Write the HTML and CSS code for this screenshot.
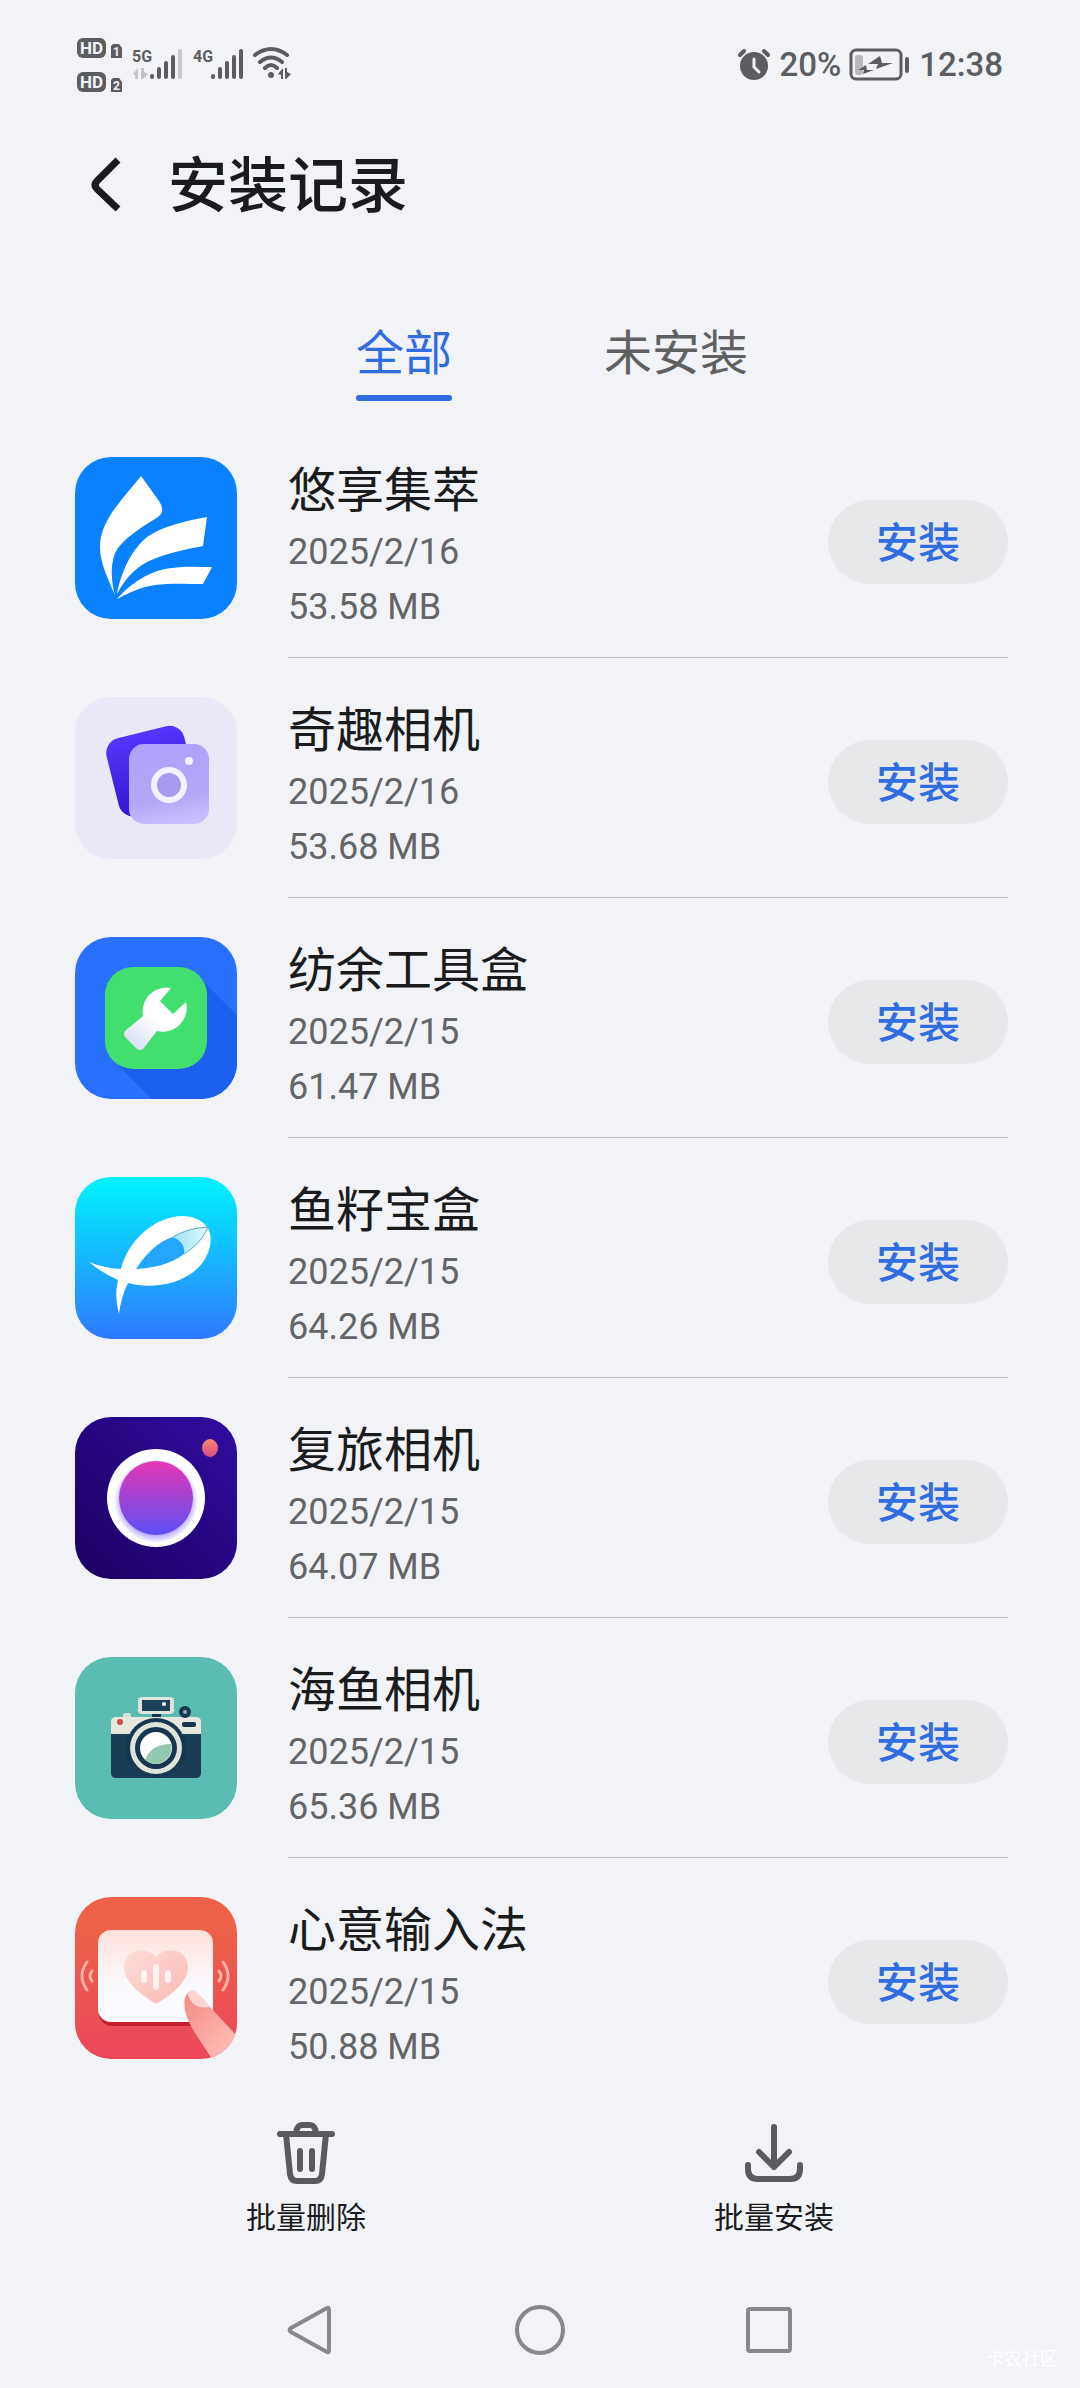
FILE: index.html
```html
<!DOCTYPE html>
<html lang="zh-CN">
<head>
    <meta charset="UTF-8">
    <meta name="viewport" content="width=device-width, initial-scale=1.0">
    <title>安装记录</title>
    <link rel="stylesheet" href="styles.css">
</head>
<body>
    <div class="status-bar">
        <svg class="signal" width="216" height="60" viewBox="0 0 216 60">
            <!-- HD badges -->
            <rect x="0" y="4" width="29" height="20" rx="6" fill="#5c5d5f"/>
            <text x="3" y="20" class="hd">HD</text>
            <path d="M36 10h6l3 4v10h-11v-12z" fill="#5c5d5f"/>
            <text x="36" y="22" class="sim">1</text>
            <rect x="0" y="38" width="29" height="20" rx="6" fill="#5c5d5f"/>
            <text x="3" y="54" class="hd">HD</text>
            <path d="M36 44h6l3 4v10h-11v-12z" fill="#5c5d5f"/>
            <text x="36" y="56" class="sim">2</text>
            <!-- mobile signal -->
            <text x="55" y="28" class="net">5G</text>
            <path d="M56 40l5-6v11h-3v-4zM64 34h3v4l4 2-5 5h-2z" fill="#c3c4c7"/>
            <path d="M75 43v-1M82 43v-8M89 43v-14M96 43v-20" class="bars"/>
            <path d="M103 43v-26" class="bars bars-off"/>
            <text x="116" y="28" class="net">4G</text>
            <path d="M136 43v-1M143 43v-8M150 43v-14M157 43v-20M164 43v-26" class="bars"/>
            <!-- wifi -->
            <path d="M178 21q16-12 32 0M183 28q11-9 22 0M188 34q6-6 12 0" fill="none" stroke="#5c5d5f" stroke-width="4" stroke-linecap="round"/>
            <circle cx="194" cy="41" r="3" fill="#5c5d5f"/>
            <path d="M201 40l5-6v11h-2v-4zM208 34h2v4l4 2-5 5h-1z" fill="#5c5d5f"/>
        </svg>
        <div class="status-right">
            <svg width="34" height="34" viewBox="0 0 34 34">
                <circle cx="17" cy="19" r="14" fill="#5c5d5f"/>
                <path d="M3 8l4-4M27 4l4 4" stroke="#5c5d5f" stroke-width="4" stroke-linecap="round"/>
                <path d="M17 12v8l5 5" fill="none" stroke="#f1f3f7" stroke-width="3" stroke-linecap="round"/>
            </svg>
            <span>20%</span>
            <svg width="62" height="34" viewBox="0 0 62 34">
                <rect x="2" y="3" width="50" height="29" rx="5" fill="none" stroke="#5c5d5f" stroke-width="3"/>
                <rect x="6" y="8" width="8" height="20" rx="3" fill="#b8b9bb"/>
                <path d="M31 9l-12 8h10l-2 5 17-6h-11zM17 18l-8 5h6l-1 4 11-4h-7z" fill="#5c5d5f"/>
                <rect x="56" y="10" width="4" height="16" rx="2" fill="#5c5d5f"/>
            </svg>
            <span>12:38</span>
        </div>
    </div>

    <header class="header">
        <button class="back" aria-label="返回">
            <svg width="36" height="60" viewBox="0 0 36 60">
                <path d="M30 5L9 26q-4 4 0 8l21 20" fill="none" stroke="#1a1b1d" stroke-width="7" stroke-linejoin="round"/>
            </svg>
        </button>
        <h1>安装记录</h1>
    </header>

    <nav class="tabs">
        <a href="#all" class="tab active"><span>全部</span></a>
        <a href="#pending" class="tab"><span>未安装</span></a>
    </nav>

    <ul class="list">
        <li class="item">
            <svg class="app-icon" viewBox="0 0 162 162">
                <rect width="162" height="162" fill="#0a82ff"/>
                <g fill="#fff">
                    <path d="M66 19L84 44Q91 54 83 60C64 72 44 84 39 99C35 112 37 128 40 138C32 120 25 105 25 90C25 63 48 42 66 19Z"/>
                    <path d="M42 137C46 115 57 92 72 80C88 69 110 64 132 60L128 89C108 93 88 97 72 105C58 113 50 122 42 137Z"/>
                    <path d="M42 142C55 127 75 113 97 111C110 109 124 110 137 110L128 127C110 127 95 126 80 128C65 130 54 136 42 142Z"/>
                </g>
            </svg>
            <div class="item-body">
                <div class="info">
                    <h2>悠享集萃</h2>
                    <p>2025/2/16</p>
                    <p>53.58 MB</p>
                </div>
                <button class="install">安装</button>
            </div>
        </li>
        <li class="item">
            <svg class="app-icon" viewBox="0 0 162 162">
                <defs>
                    <linearGradient id="cardBack" x1="0" y1="0" x2="0" y2="1">
                        <stop offset="0" stop-color="#5636fb"/>
                        <stop offset="1" stop-color="#3115cf"/>
                    </linearGradient>
                    <linearGradient id="cardFront" x1="0.4" y1="0" x2="0.6" y2="1">
                        <stop offset="0" stop-color="#b0a1fb"/>
                        <stop offset="0.65" stop-color="#b3a6f6"/>
                        <stop offset="1" stop-color="#c8c0ff"/>
                    </linearGradient>
                </defs>
                <rect width="162" height="162" fill="#e8e8f7"/>
                <rect width="80" height="80" rx="15" fill="url(#cardBack)" transform="translate(28 45) rotate(-14)"/>
                <rect x="54" y="47" width="80" height="80" rx="15" fill="url(#cardFront)"/>
                <circle cx="94" cy="88" r="15" fill="#a79aee" stroke="#f4f1ff" stroke-width="6"/>
                <circle cx="114" cy="64" r="4" fill="#f4f1ff"/>
            </svg>
            <div class="item-body">
                <div class="info">
                    <h2>奇趣相机</h2>
                    <p>2025/2/16</p>
                    <p>53.68 MB</p>
                </div>
                <button class="install">安装</button>
            </div>
        </li>
        <li class="item">
            <svg class="app-icon" viewBox="0 0 162 162">
                <defs>
                    <linearGradient id="wrench" x1="0.1" y1="1" x2="0.5" y2="0.5">
                        <stop offset="0" stop-color="#d3dcf0"/>
                        <stop offset="1" stop-color="#fff"/>
                    </linearGradient>
                </defs>
                <rect width="162" height="162" fill="#2970ff"/>
                <path d="M122 38L162 78V162H77L38 123Z" fill="#1b60ef"/>
                <rect x="30" y="30" width="102" height="102" rx="28" fill="#40df6e"/>
                <path d="M96 51L85 64L98 77L111 65A24 24 0 0 1 82 94L68 112Q65 114 62 112L50 100Q48 97 50 94L68 79A24 24 0 0 1 96 51Z" fill="url(#wrench)"/>
            </svg>
            <div class="item-body">
                <div class="info">
                    <h2>纺余工具盒</h2>
                    <p>2025/2/15</p>
                    <p>61.47 MB</p>
                </div>
                <button class="install">安装</button>
            </div>
        </li>
        <li class="item">
            <svg class="app-icon" viewBox="0 0 162 162">
                <defs>
                    <linearGradient id="sea" x1="0" y1="0" x2="0" y2="1">
                        <stop offset="0.05" stop-color="#00eeff"/>
                        <stop offset="1" stop-color="#2f79ff"/>
                    </linearGradient>
                    <linearGradient id="fin" x1="0" y1="0" x2="1" y2="0">
                        <stop offset="0" stop-color="#9fe2f7"/>
                        <stop offset="1" stop-color="#e2f7fc"/>
                    </linearGradient>
                </defs>
                <rect width="162" height="162" fill="url(#sea)"/>
                <path d="M14 85Q29 91 46 92C52 66 78 39 108 39Q124 39 133 51C141 67 130 90 112 99C96 109 72 111 53 106Q46 120 44 137Q39 120 43 103Q27 96 14 85Z" fill="#fff"/>
                <path d="M61 92C70 78 83 64 98 60Q114 65 109 77C96 87 78 91 61 92Z" fill="#24a6ff"/>
                <path d="M98 60C110 53 120 51 133 50C128 62 120 70 109 77Q111 66 98 60Z" fill="url(#fin)"/>
                <path d="M98 60C110 53 120 51 133 50C128 62 120 70 109 77" fill="none" stroke="#54a9c4"/>
            </svg>
            <div class="item-body">
                <div class="info">
                    <h2>鱼籽宝盒</h2>
                    <p>2025/2/15</p>
                    <p>64.26 MB</p>
                </div>
                <button class="install">安装</button>
            </div>
        </li>
        <li class="item">
            <svg class="app-icon" viewBox="0 0 162 162">
                <defs>
                    <linearGradient id="night" x1="1" y1="0" x2="0" y2="1">
                        <stop offset="0" stop-color="#300ca0"/>
                        <stop offset="1" stop-color="#1c0060"/>
                    </linearGradient>
                    <linearGradient id="lens" x1="0" y1="0" x2="0" y2="1">
                        <stop offset="0" stop-color="#e637b4"/>
                        <stop offset="1" stop-color="#5b50f5"/>
                    </linearGradient>
                    <linearGradient id="rec" x1="0" y1="0" x2="0" y2="1">
                        <stop offset="0" stop-color="#fa866f"/>
                        <stop offset="1" stop-color="#d84d84"/>
                    </linearGradient>
                    <radialGradient id="glow">
                        <stop offset="0.8" stop-color="#b5a2ff"/>
                        <stop offset="1" stop-color="#fff"/>
                    </radialGradient>
                </defs>
                <rect width="162" height="162" fill="url(#night)"/>
                <circle cx="81" cy="81" r="49" fill="#fff"/>
                <circle cx="81" cy="84" r="42" fill="url(#glow)"/>
                <circle cx="81" cy="81" r="37" fill="url(#lens)"/>
                <ellipse cx="135" cy="31" rx="8" ry="9" fill="url(#rec)"/>
            </svg>
            <div class="item-body">
                <div class="info">
                    <h2>复旅相机</h2>
                    <p>2025/2/15</p>
                    <p>64.07 MB</p>
                </div>
                <button class="install">安装</button>
            </div>
        </li>
        <li class="item">
            <svg class="app-icon" viewBox="0 0 162 162">
                <rect width="162" height="162" fill="#5bbcb1"/>
                <rect x="77" y="54" width="9" height="12" fill="#16374f"/>
                <rect x="63" y="40" width="36" height="17" rx="4" fill="#dfe5dc"/>
                <rect x="67" y="43" width="28" height="11" fill="#1d4159"/>
                <circle cx="89" cy="47" r="2" fill="#fff"/>
                <rect x="48" y="56" width="8" height="7" rx="2" fill="#d5e0d6"/>
                <path d="M36 77V65q0-5 5-5h80q5 0 5 5v12z" fill="#e6e7dd"/>
                <path d="M36 77h90v39q0 5-5 5H41q-5 0-5-5z" fill="#1a3d55"/>
                <circle cx="45" cy="65" r="3" fill="#cf4a4e"/>
                <circle cx="110" cy="55" r="4" fill="#8fb5b5" stroke="#16374f" stroke-width="4"/>
                <rect x="107" y="65" width="14" height="5" rx="2" fill="#16374f"/>
                <circle cx="81" cy="91" r="30" fill="#16374f"/>
                <circle cx="81" cy="91" r="26" fill="#dfe3da"/>
                <circle cx="81" cy="91" r="21" fill="#16374f"/>
                <circle cx="81" cy="91" r="16" fill="#fff"/>
                <path d="M70 103Q76 87 96 87A16 16 0 0 1 70 103Z" fill="#92c9b0"/>
            </svg>
            <div class="item-body">
                <div class="info">
                    <h2>海鱼相机</h2>
                    <p>2025/2/15</p>
                    <p>65.36 MB</p>
                </div>
                <button class="install">安装</button>
            </div>
        </li>
        <li class="item">
            <svg class="app-icon" viewBox="0 0 162 162">
                <defs>
                    <linearGradient id="coral" x1="0" y1="0" x2="0" y2="1">
                        <stop offset="0.2" stop-color="#ec6147"/>
                        <stop offset="1" stop-color="#ec475a"/>
                    </linearGradient>
                    <linearGradient id="panel" x1="0" y1="0" x2="0" y2="1">
                        <stop offset="0" stop-color="#ffe0da"/>
                        <stop offset="0.6" stop-color="#fbfaff"/>
                    </linearGradient>
                    <linearGradient id="heart" x1="0" y1="0" x2="1" y2="1">
                        <stop offset="0" stop-color="#ffdcd8"/>
                        <stop offset="1" stop-color="#fbb9b3"/>
                    </linearGradient>
                    <linearGradient id="finger" x1="0" y1="0" x2="1" y2="1">
                        <stop offset="0" stop-color="#f58a84"/>
                        <stop offset="1" stop-color="#ffc4bb"/>
                    </linearGradient>
                </defs>
                <rect width="162" height="162" fill="url(#coral)"/>
                <rect x="24" y="37" width="114" height="92" rx="13" fill="#c5202f"/>
                <rect x="23" y="33" width="115" height="92" rx="13" fill="url(#panel)"/>
                <path d="M81 107Q49 88 49 70C49 52 71 48 81 60C91 48 113 52 113 70Q113 88 81 107Z" fill="url(#heart)"/>
                <path d="M69 76v7M81 70v20M93 76v7" stroke="#fff3f0" stroke-width="6" stroke-linecap="round"/>
                <g fill="none" stroke="#ffb3a7" stroke-width="3" stroke-linecap="round">
                    <path d="M12 65q-10 14 0 28M17 74q-4 5 0 10"/>
                    <path d="M148 65q10 14 0 28M144 74q4 5 0 10"/>
                </g>
                <path d="M110 101Q114 91 121 95L162 139V162H137L118 133Q107 114 110 101Z" fill="url(#finger)"/>
                <path d="M113 97Q115 92 120 94Q129 101 135 110Q117 113 113 97Z" fill="#ffd6cf"/>
            </svg>
            <div class="item-body">
                <div class="info">
                    <h2>心意输入法</h2>
                    <p>2025/2/15</p>
                    <p>50.88 MB</p>
                </div>
                <button class="install">安装</button>
            </div>
        </li>
    </ul>

    <div class="toolbar">
        <button class="tool">
            <svg width="64" height="64" viewBox="0 0 64 64" class="tool-icon">
                <path d="M6 14h52M22 13q1-8 6-8h8q5 0 6 8M12 14l4 40q1 7 7 7h18q6 0 7-7l4-40M26 31v18M38 31v18"/>
            </svg>
            <span>批量删除</span>
        </button>
        <button class="tool">
            <svg width="64" height="64" viewBox="0 0 64 64" class="tool-icon">
                <path d="M32 7v40M17 32l15 15 15-15M6 45v4q0 10 10 10h32q10 0 10-10v-4"/>
            </svg>
            <span>批量安装</span>
        </button>
    </div>

    <div class="nav-bar">
        <button aria-label="返回"><svg width="52" height="52" viewBox="0 0 52 52"><path d="M42 4q2-1 2 2v40q0 3-2 2L6 28q-3-2 0-4z"/></svg></button>
        <button aria-label="主页"><svg width="52" height="52" viewBox="0 0 52 52"><circle cx="26" cy="26" r="23"/></svg></button>
        <button aria-label="最近任务"><svg width="52" height="52" viewBox="0 0 52 52"><rect x="5" y="5" width="42" height="42" rx="2"/></svg></button>
        <span class="watermark">卡农社区</span>
    </div>
</body>
</html>
```
FILE: styles.css
```css
* {
    box-sizing: border-box;
}

body {
    margin: 0;
    min-height: 100vh;
    display: flex;
    flex-direction: column;
    background: #f1f3f7;
    color: #1a1b1d;
    font-family: Roboto, "Noto Sans CJK SC", sans-serif;
}

h1, h2, p, ul {
    margin: 0;
    padding: 0;
}

button {
    border: none;
    background: none;
    padding: 0;
    color: inherit;
    font-family: inherit;
    cursor: pointer;
}

svg {
    display: block;
    flex-shrink: 0;
}

/* status bar */
.status-bar {
    display: flex;
    justify-content: space-between;
    align-items: center;
    height: 128px;
    padding: 0 77px;
    color: #5c5d5f;
}

.status-right {
    display: flex;
    align-items: center;
    gap: 8px;
    font-size: 33px;
    font-weight: 500;
}

.hd {
    font-size: 17px;
    font-weight: 700;
    fill: #f1f3f7;
}

.sim {
    font-size: 12px;
    font-weight: 700;
    fill: #f1f3f7;
}

.net {
    font-size: 16px;
    font-weight: 700;
    fill: #5c5d5f;
}

.bars {
    stroke: #5c5d5f;
    stroke-width: 4;
    stroke-linecap: round;
}

.bars-off {
    stroke: #c9cacd;
}

/* header */
.header {
    display: flex;
    align-items: center;
    gap: 44px;
    height: 114px;
    padding: 0 88px;
}

.header h1 {
    padding-top: 4px;
    font-size: 60px;
    font-weight: 500;
    line-height: 80px;
}

.tabs {
    display: flex;
    justify-content: center;
    height: 176px;
    padding-top: 78px;
}

.tab {
    width: 272px;
    text-align: center;
    text-decoration: none;
    font-size: 48px;
    line-height: 68px;
    color: #5f6062;
}

.tab span {
    display: inline-block;
}

.tab.active {
    color: #2f6de0;
}

.tab.active span::after {
    content: "";
    display: block;
    height: 6px;
    margin-top: 7px;
    border-radius: 3px;
    background: #2f6de0;
}

/* app list */
.list {
    flex: 1;
    list-style: none;
    padding: 0 72px 0 75px;
}

.item {
    display: flex;
    align-items: stretch;
    gap: 51px;
}

.app-icon {
    width: 162px;
    height: 162px;
    margin-top: 39px;
    border-radius: 36px;
}

.item-body {
    flex: 1;
    display: flex;
    justify-content: space-between;
    align-items: flex-start;
    padding: 38px 0 22px;
    border-bottom: 1px solid #c0c2c6;
}

.item:last-child .item-body {
    border-color: transparent;
}

.info h2 {
    font-size: 48px;
    font-weight: 400;
    line-height: 69px;
}

.info p {
    font-size: 36px;
    line-height: 55px;
    color: #646567;
}

.install {
    width: 180px;
    height: 84px;
    margin-top: 44px;
    padding-bottom: 6px;
    border-radius: 42px;
    background: #e6e8ea;
    color: #2f6de0;
    font-size: 42px;
    font-weight: 500;
}

/* bottom actions */
.toolbar {
    display: flex;
    padding: 21px 72px 32px;
}

.tool {
    flex: 1;
    display: flex;
    flex-direction: column;
    align-items: center;
    gap: 12px;
    font-size: 30px;
    line-height: 44px;
}

.tool-icon {
    fill: none;
    stroke: #5a5b5d;
    stroke-width: 6;
    stroke-linecap: round;
    stroke-linejoin: round;
}

/* system navigation */
.nav-bar {
    position: relative;
    display: flex;
    justify-content: center;
    align-items: center;
    gap: 177px;
    height: 116px;
}

.nav-bar svg {
    fill: none;
    stroke: #87888a;
    stroke-width: 4;
}

.watermark {
    position: absolute;
    right: 22px;
    bottom: 18px;
    font-size: 18px;
    color: #fff;
}
```
